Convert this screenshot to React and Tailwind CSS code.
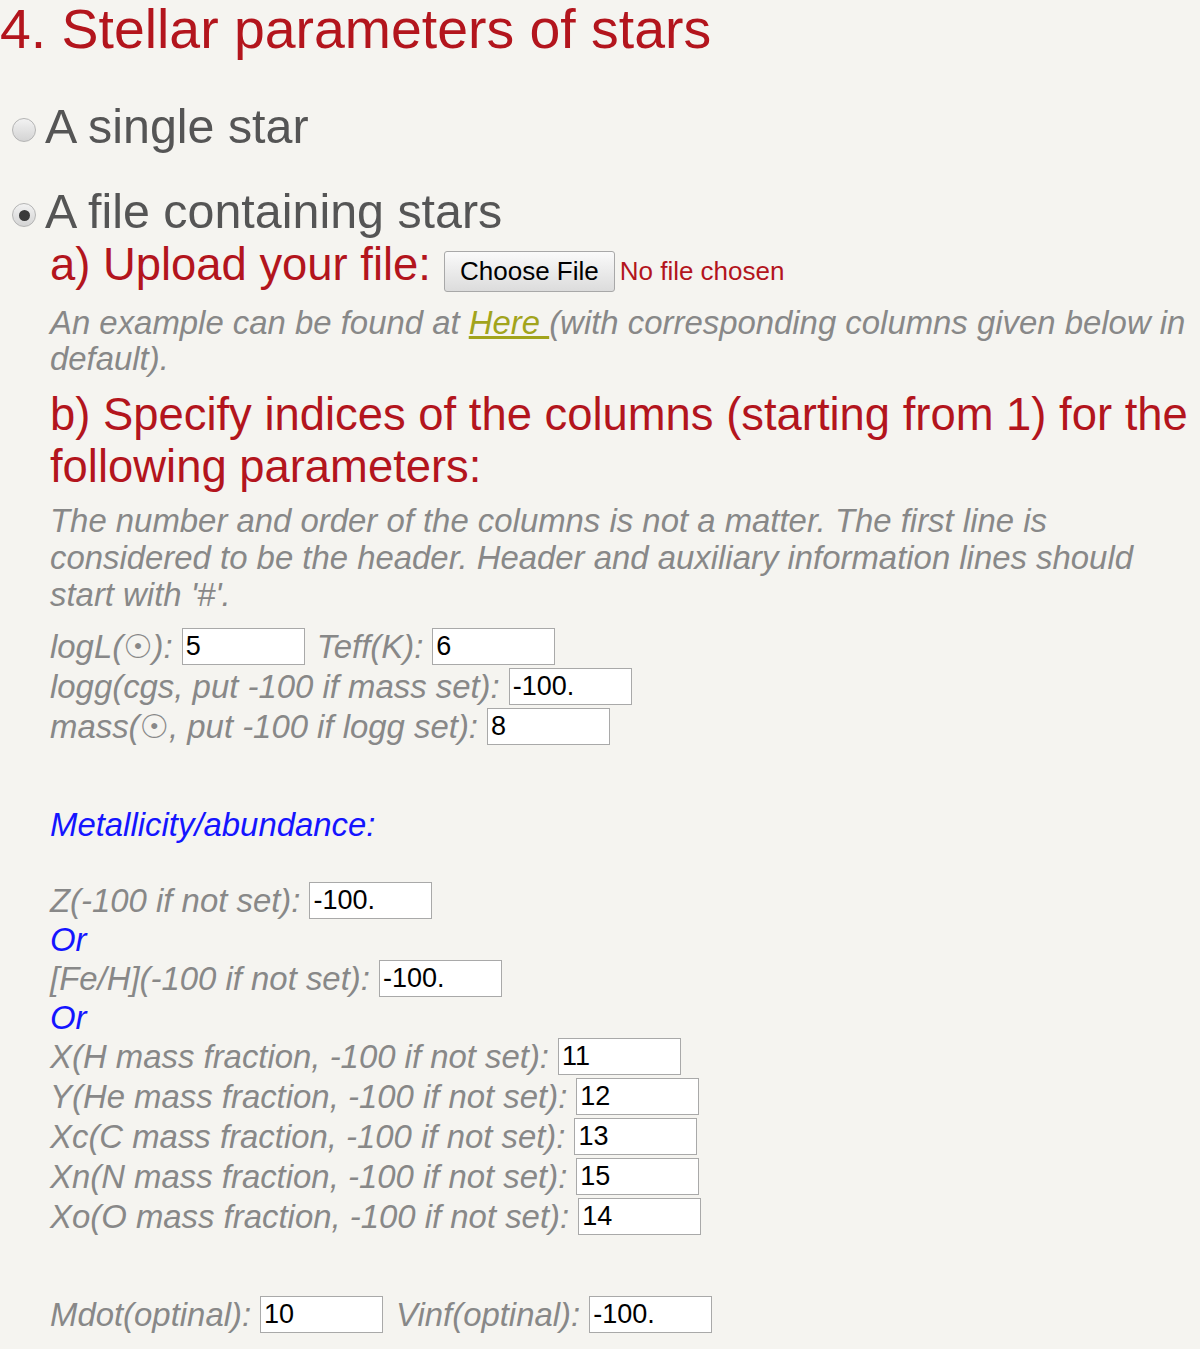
import React from "react";

function Radio({ checked }) {
  return (
    <span className="ml-[12px] mr-[9px] mt-[8px] w-[24px] h-[24px] shrink-0 rounded-full border border-[#b4b4b4] bg-gradient-to-b from-[#f2f2f2] to-[#d4d4d4] flex items-center justify-center">
      {checked && <span className="w-[11px] h-[11px] rounded-full bg-[#3a3a3a]" />}
    </span>
  );
}

function Field({ value }) {
  return (
    <input
      type="text"
      defaultValue={value}
      className="ml-[9px] w-[123px] h-[37px] shrink-0 border border-[#a9a9a9] bg-white px-[3px] text-[27px] not-italic text-black outline-none"
    />
  );
}

export default function App() {
  const label = "italic text-[32.9px] leading-[37px] text-[#888] whitespace-nowrap";
  return (
    <div className="min-h-screen bg-[#f5f4f0] font-['Liberation_Sans','DejaVu_Sans',sans-serif] overflow-hidden">
      <h1 className="h-[58px] text-[55.4px] leading-[58px] text-[#b3151d] whitespace-nowrap">4. Stellar parameters of stars</h1>

      <label className="mt-[40px] h-[56px] flex items-center">
        <Radio />
        <span className="text-[48.4px] leading-[56px] text-[#555]">A single star</span>
      </label>

      <label className="mt-[29px] h-[56px] flex items-center">
        <Radio checked />
        <span className="text-[48.4px] leading-[56px] text-[#555]">A file containing stars</span>
      </label>

      <div className="pl-[50px] pr-[6px]">
        <div className="flex items-baseline">
          <span className="text-[45.4px] leading-[52px] text-[#b3151d]">a) Upload your file:</span>
          <button className="ml-[13px] h-[41px] px-[15px] rounded-[3px] border border-[#a8a8a8] bg-gradient-to-b from-[#fafafa] to-[#dcdcdc] text-[26px] leading-[30px] text-black">
            Choose File
          </button>
          <span className="ml-[5px] text-[26px] text-[#b3151d]">No file chosen</span>
        </div>

        <p className="mt-[13px] italic text-[32.9px] leading-[36px] text-[#888]">
          An example can be found at{" "}
          <a href="#" className="text-[#a2a41c] underline">Here </a>
          (with corresponding columns given below in default).
        </p>

        <h2 className="mt-[12px] text-[45.4px] leading-[52px] text-[#b3151d]">
          b) Specify indices of the columns (starting from 1) for the following parameters:
        </h2>

        <p className="mt-[9px] italic text-[32.9px] leading-[37px] text-[#888]">
          The number and order of the columns is not a matter. The first line is considered to be the header. Header and auxiliary information lines should start with '#'.
        </p>

        <div className="mt-[14px] h-[40px] flex items-center">
          <span className={label}>logL(☉):</span>
          <Field value="5" />
          <span className={label + " ml-[12px]"}>Teff(K):</span>
          <Field value="6" />
        </div>
        <div className="h-[40px] flex items-center">
          <span className={label}>logg(cgs, put -100 if mass set):</span>
          <Field value="-100." />
        </div>
        <div className="h-[40px] flex items-center">
          <span className={label}>mass(☉, put -100 if logg set):</span>
          <Field value="8" />
        </div>

        <div className="mt-[59px] h-[37px] flex items-center">
          <span className="italic text-[32.9px] leading-[37px] text-[#1414ff]">Metallicity/abundance:</span>
        </div>

        <div className="mt-[38px] h-[40px] flex items-center">
          <span className={label}>Z(-100 if not set):</span>
          <Field value="-100." />
        </div>
        <div className="h-[38px] flex items-center">
          <span className="italic text-[32.9px] leading-[37px] text-[#1414ff]">Or</span>
        </div>
        <div className="h-[40px] flex items-center">
          <span className={label}>[Fe/H](-100 if not set):</span>
          <Field value="-100." />
        </div>
        <div className="h-[38px] flex items-center">
          <span className="italic text-[32.9px] leading-[37px] text-[#1414ff]">Or</span>
        </div>
        <div className="h-[40px] flex items-center">
          <span className={label}>X(H mass fraction, -100 if not set):</span>
          <Field value="11" />
        </div>
        <div className="h-[40px] flex items-center">
          <span className={label}>Y(He mass fraction, -100 if not set):</span>
          <Field value="12" />
        </div>
        <div className="h-[40px] flex items-center">
          <span className={label}>Xc(C mass fraction, -100 if not set):</span>
          <Field value="13" />
        </div>
        <div className="h-[40px] flex items-center">
          <span className={label}>Xn(N mass fraction, -100 if not set):</span>
          <Field value="15" />
        </div>
        <div className="h-[40px] flex items-center">
          <span className={label}>Xo(O mass fraction, -100 if not set):</span>
          <Field value="14" />
        </div>

        <div className="mt-[58px] h-[40px] flex items-center">
          <span className={label}>Mdot(optinal):</span>
          <Field value="10" />
          <span className={label + " ml-[13px]"}>Vinf(optinal):</span>
          <Field value="-100." />
        </div>
      </div>
    </div>
  );
}
